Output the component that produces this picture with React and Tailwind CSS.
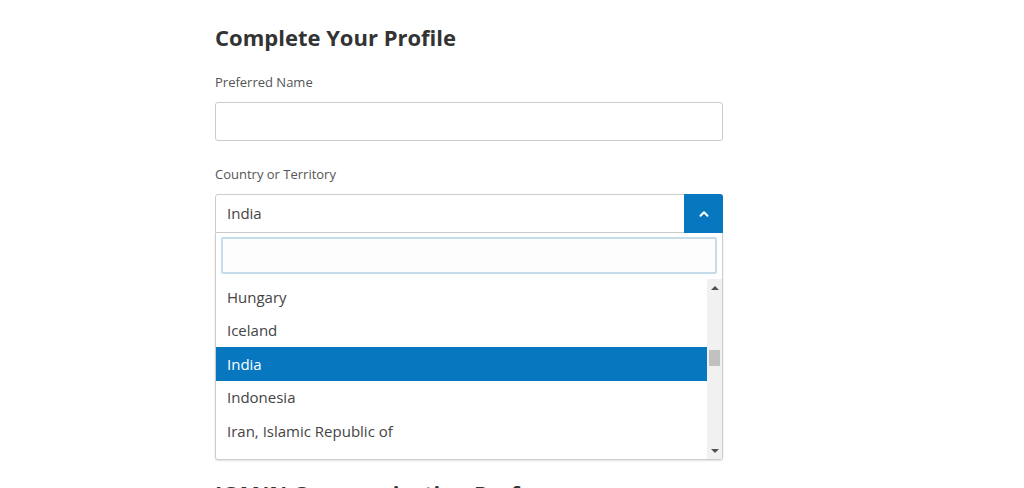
import { ChevronUp } from 'lucide-react'

const countries = ['Hungary', 'Iceland', 'India', 'Indonesia', 'Iran, Islamic Republic of']

export default function App() {
  const selected = 'India'

  return (
    <div className="min-h-screen bg-white font-['Open_Sans',sans-serif] text-[#444] overflow-hidden">
      <div className="ml-[215px] w-[508px] pt-[22px]">
        <h1 className="text-[22px] leading-[30px] font-bold text-[#333]">Complete Your Profile</h1>

        {/* Preferred name */}
        <label className="block mt-[21px] text-[13px] leading-[18px] text-[#555]">Preferred Name</label>
        <input type="text" className="block mt-[11px] w-full h-[39px] border border-[#ccc] rounded-[3px] px-3 text-[15px] focus:outline-none" />

        {/* Country */}
        <label className="block mt-[24px] text-[13px] leading-[18px] text-[#555]">Country or Territory</label>
        <div className="mt-[11px]">
          <div className="flex h-[39px] border border-[#ccc] rounded-t-[3px]">
            <div className="flex-1 flex items-center pl-[11px] text-[15px] text-[#444]">India</div>
            <button className="w-[39px] -my-px -mr-px bg-[#0778c0] rounded-tr-[3px] flex items-center justify-center text-white">
              <ChevronUp className="w-[14px] h-[14px]" strokeWidth={3.5} />
            </button>
          </div>
          <div className="border border-t-0 border-[#ccc] rounded-b-[3px] shadow-[0_1px_2px_rgba(0,0,0,0.12)]">
            <div className="px-[5px] pt-[4px]">
              <input type="text" className="block w-full h-[37px] border-2 border-[#c5dcec] rounded-[2px] bg-[#fdfdfd] focus:outline-none" />
            </div>
            <div className="flex mt-[5px] h-[180px] overflow-hidden">
              <ul className="flex-1 pt-px">
                {countries.map((c) => (
                  <li key={c}
                    className={`h-[33.5px] flex items-center pl-[11px] text-[15px] ${c === selected ? 'bg-[#0778c0] text-white' : 'text-[#444]'}`}>
                    {c}
                  </li>
                ))}
              </ul>
              {/* scrollbar */}
              <div className="w-[15px] bg-[#f1f1f1] flex flex-col items-center">
                <div className="h-[17px] flex items-center justify-center">
                  <div className="w-0 h-0 border-x-[4px] border-x-transparent border-b-[4px] border-b-[#505050]" />
                </div>
                <div className="flex-1 w-full px-[2px]">
                  <div className="mt-[54px] h-[16px] bg-[#c1c1c1]" />
                </div>
                <div className="h-[17px] flex items-center justify-center">
                  <div className="w-0 h-0 border-x-[4px] border-x-transparent border-t-[4px] border-t-[#505050]" />
                </div>
              </div>
            </div>
          </div>
        </div>

        <h2 className="mt-[18px] text-[22px] leading-[30px] font-bold text-[#333]">ICANN Communication Preferences</h2>
      </div>
    </div>
  )
}
